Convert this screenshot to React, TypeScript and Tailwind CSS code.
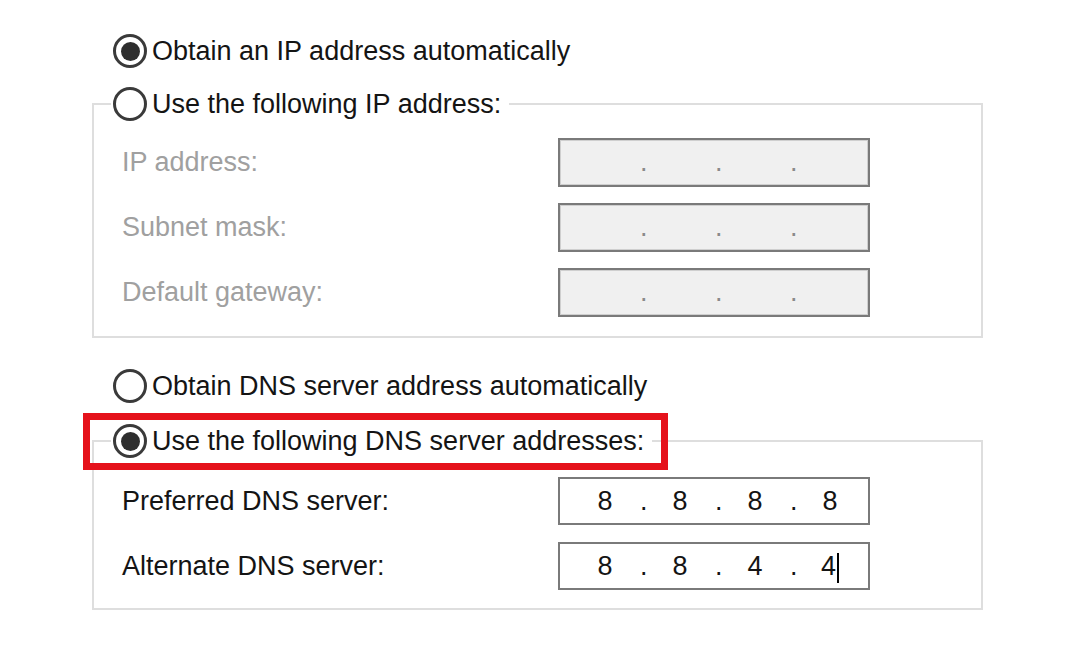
import { ReactNode } from 'react';

const Radio = ({ checked }: { checked?: boolean }) => (
  <span className="flex items-center justify-center w-[34px] h-[34px] rounded-full border-[3px] border-[#3a3a3a] bg-white shrink-0">
    {checked && <span className="w-[19px] h-[19px] rounded-full bg-[#2e2e2e]" />}
  </span>
);

const RadioLabel = ({ checked, children }: { checked?: boolean; children: ReactNode }) => (
  <span className="flex items-center gap-[5px] h-[34px] text-[27px] leading-none text-[#141414]">
    <Radio checked={checked} />
    <span>{children}</span>
  </span>
);

const IpField = ({ octets, disabled, cursor }: { octets: string[]; disabled?: boolean; cursor?: boolean }) => (
  <div
    className={
      disabled
        ? 'flex items-center w-[312px] h-[49px] pl-[10px] border-2 border-[#7a7a7a] bg-[#f0f0f0] shadow-[inset_0_0_0_1px_#cfcfcf] text-[27px] text-[#8a8a8a]'
        : 'flex items-center w-[312px] h-[48px] pl-[10px] border-2 border-[#7a7a7a] bg-white text-[27px] text-[#141414]'
    }
  >
    {octets.map((o, i) => (
      <div key={i} className="flex items-center">
        <span className="w-[70px] text-center">
          {o}
          {cursor && i === 3 && <span className="inline-block w-[2px] h-[30px] ml-[1px] bg-black align-middle" />}
        </span>
        {i < 3 && <span className="w-[5px] text-center">.</span>}
      </div>
    ))}
  </div>
);

const Row = ({ label, disabled, children }: { label: string; disabled?: boolean; children: ReactNode }) => (
  <div className="flex items-center">
    <span className={disabled ? 'w-[436px] text-[27px] text-[#a0a0a0]' : 'w-[436px] text-[27px] text-[#141414]'}>
      {label}
    </span>
    {children}
  </div>
);

export default function App() {
  const empty = ['', '', '', ''];
  return (
    <div className="w-[1081px] h-[647px] bg-white pl-[92px] pt-[34px] font-['Liberation_Sans',Arial,sans-serif]">
      <div className="ml-[21px]">
        <RadioLabel checked>Obtain an IP address automatically</RadioLabel>
      </div>

      <fieldset className="mt-[19px] w-[891px] border-2 border-[#dedede] pb-[19px]">
        <legend className="ml-[17px] pl-[2px] pr-[8px]">
          <RadioLabel>Use the following IP address:</RadioLabel>
        </legend>
        <div className="flex flex-col gap-[16px] pt-[17px] pl-[28px]">
          <Row label="IP address:" disabled>
            <IpField octets={empty} disabled />
          </Row>
          <Row label="Subnet mask:" disabled>
            <IpField octets={empty} disabled />
          </Row>
          <Row label="Default gateway:" disabled>
            <IpField octets={empty} disabled />
          </Row>
        </div>
      </fieldset>

      <div className="ml-[21px] mt-[31px]">
        <RadioLabel>Obtain DNS server address automatically</RadioLabel>
      </div>

      <fieldset className="mt-[21px] w-[891px] border-2 border-[#dedede] pb-[18px]">
        <legend className="relative ml-[17px] pl-[2px] pr-[8px]">
          <RadioLabel checked>Use the following DNS server addresses:</RadioLabel>
          <span className="absolute -left-[28px] -top-[11px] w-[585px] h-[57px] border-[7px] border-[#e5121b]" />
        </legend>
        <div className="flex flex-col gap-[17px] pt-[19px] pl-[28px]">
          <Row label="Preferred DNS server:">
            <IpField octets={['8', '8', '8', '8']} />
          </Row>
          <Row label="Alternate DNS server:">
            <IpField octets={['8', '8', '4', '4']} cursor />
          </Row>
        </div>
      </fieldset>
    </div>
  );
}
